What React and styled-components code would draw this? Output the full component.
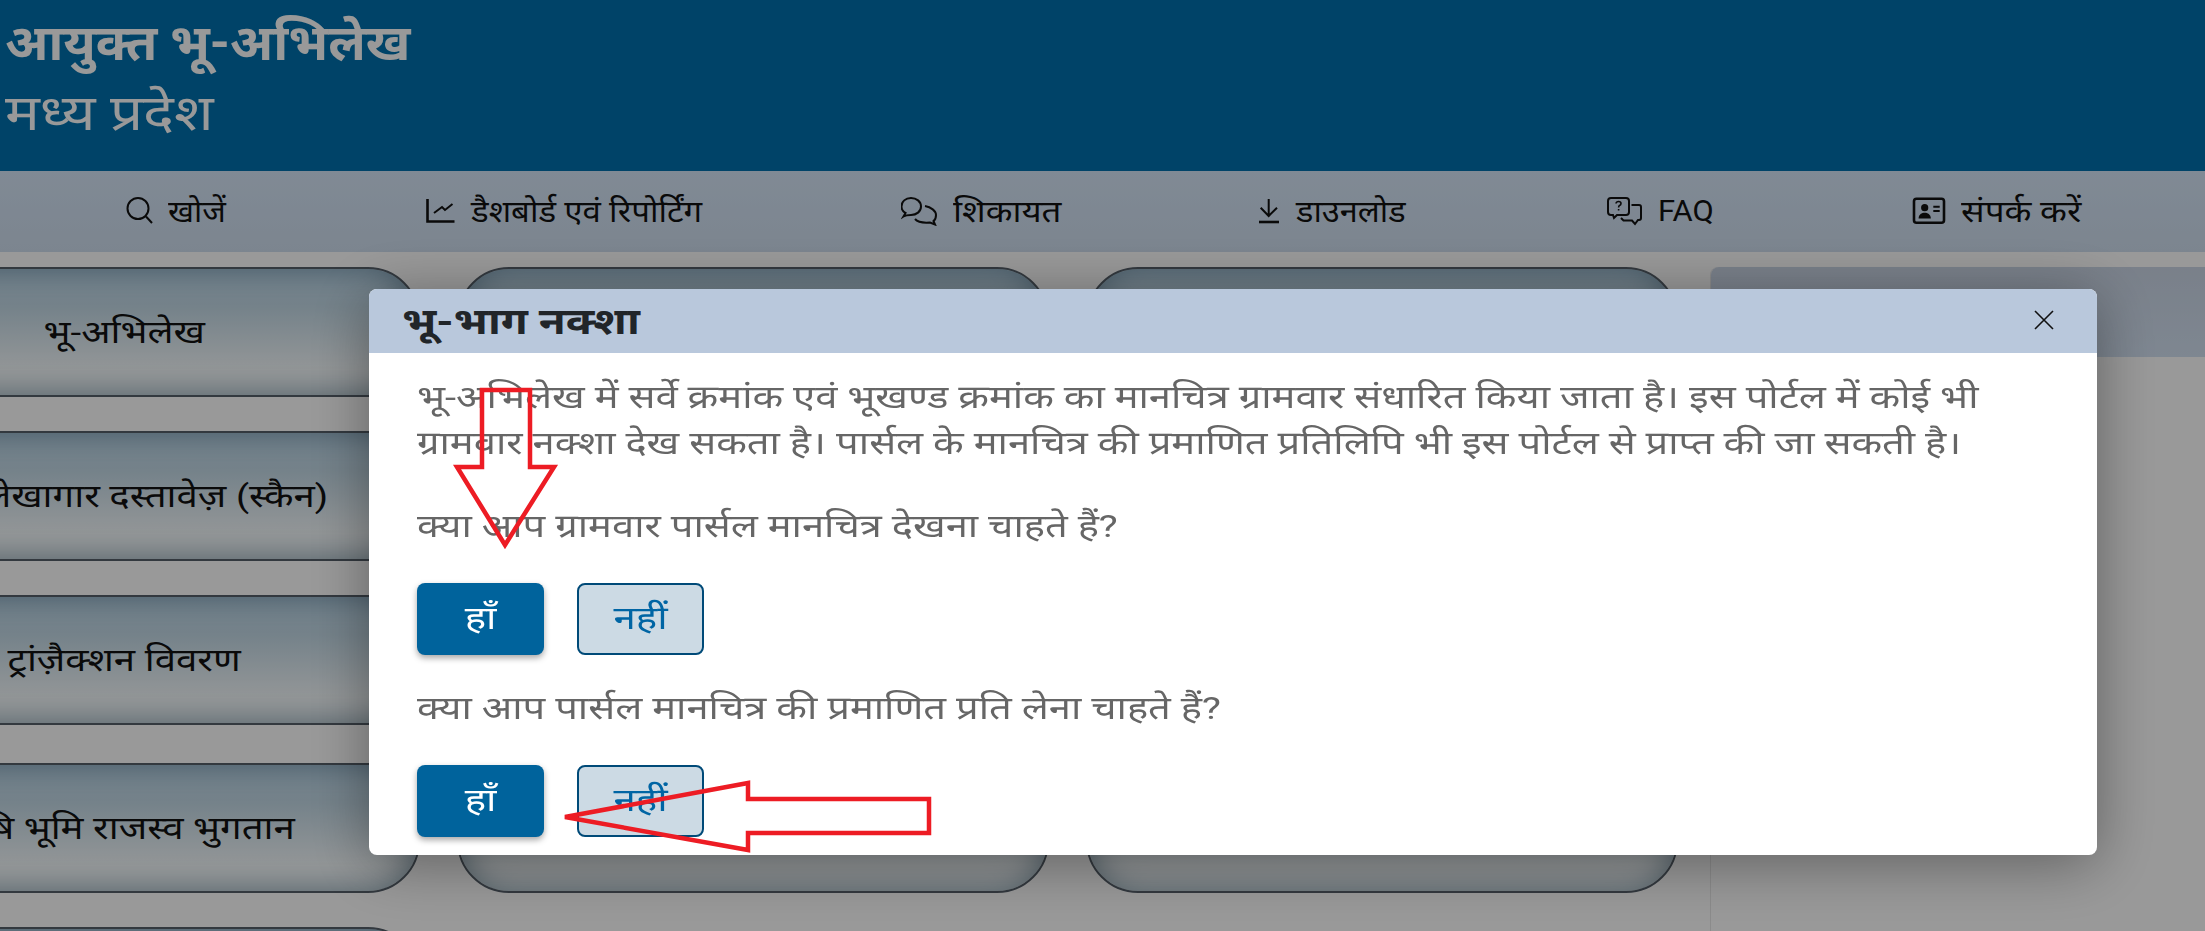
import React from 'react'
import styled, { createGlobalStyle } from 'styled-components'

const GlobalStyle = createGlobalStyle`
  html, body {
    margin: 0;
    padding: 0;
    height: 100%;
    overflow: hidden;
    background: #fff;
    font-family: Roboto, "Noto Sans", "DejaVu Sans", sans-serif;
  }
  * { box-sizing: border-box; }
`

// nav icons, drawn from the reference
const SearchIcon = () => (
  <NavIcon $w={28} $h={27} viewBox='0 0 28 27'>
    <circle cx='13' cy='11.5' r='10.5' />
    <path d='M21 19.5 L27 26' />
  </NavIcon>
)

const ChartIcon = () => (
  <NavIcon $w={30} $h={26} viewBox='0 0 30 26'>
    <path d='M1.5 1 V23.5 H28.5' strokeWidth='2.6' />
    <path d='M8 15 L16 9 L19 12 L26.5 6' />
  </NavIcon>
)

const ChatIcon = () => (
  <NavIcon $w={37} $h={30} viewBox='8 9 37 30'>
    <path d='M10.5 29.5 L12.5 26 C9.5 24.5 8.5 22 8.5 19.5 C8.5 14.5 12.5 11 18 11 C23.5 11 28 14.5 28 19.5 C28 24.5 23.5 28 18 28 C15.5 28 13 28 10.5 29.5 Z' />
    <path d='M32 19 C38 20 43 24 43 28 C43 31 42 33 40.5 34 L42 37.5 L37 35.5 C31 36 25 35.5 22 32' />
  </NavIcon>
)

const DownloadIcon = () => (
  <NavIcon $w={24} $h={28} viewBox='9 10 24 28'>
    <path d='M20.7 12 V29 M12.7 20.7 L20.7 29 L29 20.7' />
    <path d='M11 35 H31' strokeWidth='2.6' />
  </NavIcon>
)

const FaqIcon = () => (
  <NavIcon $w={37} $h={30} viewBox='8 9 37 30'>
    <path d='M13 11 H28 Q31 11 31 14 V25 Q31 28 28 28 H19 L16 31 L15 28 H13 Q10 28 10 25 V14 Q10 11 13 11 Z' />
    <path d='M33.5 18 H41 Q43 18 43 20 V31 Q43 33 41 33 H40 L37 37 L34 33.5 H25.5 L23 31' />
    <path d='M18 16.5 Q18.3 14.5 20.6 14.5 Q23 14.5 23 16.5 Q23 18 21.5 18.6 Q20.6 19 20.6 20.5 M20.6 22 V23.5' strokeWidth='1.6' />
  </NavIcon>
)

const ContactIcon = () => (
  <NavIcon $w={34} $h={28} viewBox='8 11 34 28'>
    <rect x='10' y='12.7' width='30' height='24' rx='2.5' strokeWidth='2.6' />
    <circle cx='20.7' cy='21.7' r='3.6' fill='#111' stroke='none' />
    <path d='M14.6 32.5 C14.6 28.5 17.8 26.8 20.7 26.8 C23.6 26.8 26.8 28.5 26.8 32.5 Z' fill='#111' stroke='none' />
    <path d='M29.3 20.7 H35.7 M29.3 25 H35.7' />
  </NavIcon>
)

const navItems = [
  { label: 'खोजें', Icon: SearchIcon, width: 103, stretch: 1.06 },
  { label: 'डैशबोर्ड एवं रिपोर्टिंग', Icon: ChartIcon, width: 277, stretch: 1.1 },
  { label: 'शिकायत', Icon: ChatIcon, width: 159, stretch: 1.16 },
  { label: 'डाउनलोड', Icon: DownloadIcon, width: 151, stretch: 1.085 },
  { label: 'FAQ', Icon: FaqIcon, width: 108, stretch: 1.03 },
  { label: 'संपर्क करें', Icon: ContactIcon, width: 168, stretch: 1.167 },
]

const columns = [
  ['भू-अभिलेख', 'अभिलेखागार दस्तावेज़ (स्कैन)', 'ट्रांज़ैक्शन विवरण', 'कृषि भूमि राजस्व भुगतान', ''],
  ['', '', '', ''],
  ['', '', '', ''],
]

const Question = ({ text }) => (
  <>
    <BodyText>
      <Wide $x={1.248}>{text}</Wide>
    </BodyText>
    <ButtonRow>
      <YesButton>
        <Wide $x={1.26} $origin='center'>हाँ</Wide>
      </YesButton>
      <NoButton>
        <Wide $x={1.26} $origin='center'>नहीं</Wide>
      </NoButton>
    </ButtonRow>
  </>
)

const App = () => {
  return (
    <Page>
      <GlobalStyle />
      <Header>
        <Title>
          <Wide $x={1.02}>आयुक्त भू-अभिलेख</Wide>
        </Title>
        <SubTitle>
          <Wide $x={1.165}>मध्य प्रदेश</Wide>
        </SubTitle>
      </Header>
      <Nav>
        {navItems.map(({ label, Icon, width, stretch }) => (
          <NavItem key={label} $w={width}>
            <Icon />
            <Wide $x={stretch}>{label}</Wide>
          </NavItem>
        ))}
      </Nav>
      <Content>
        {columns.map((cards, i) => (
          <Column key={i}>
            {cards.map((text, j) => (
              <Card key={j}>
                <Wide $x={1.2} $origin='center'>{text}</Wide>
              </Card>
            ))}
          </Column>
        ))}
        <SidePanel>
          <SideHead />
        </SidePanel>
      </Content>

      <Backdrop>
        <Modal>
          <ModalHead>
            <ModalTitle>
              <Wide $x={1.22}>भू-भाग नक्शा</Wide>
            </ModalTitle>
            <CloseIcon viewBox='0 0 20 20'>
              <path d='M1 1 L19 19 M19 1 L1 19' />
            </CloseIcon>
          </ModalHead>
          <ModalBody>
            <Intro>
              <IntroLine $x={1.248}>
                भू-अभिलेख में सर्वे क्रमांक एवं भूखण्ड क्रमांक का मानचित्र ग्रामवार संधारित किया जाता है। इस पोर्टल में कोई भी
              </IntroLine>
              <IntroLine $x={1.248}>
                ग्रामवार नक्शा देख सकता है। पार्सल के मानचित्र की प्रमाणित प्रतिलिपि भी इस पोर्टल से प्राप्त की जा सकती है।
              </IntroLine>
            </Intro>
            <Question text='क्या आप ग्रामवार पार्सल मानचित्र देखना चाहते हैं?' />
            <Question text='क्या आप पार्सल मानचित्र की प्रमाणित प्रति लेना चाहते हैं?' />
          </ModalBody>
          <Arrows viewBox='0 0 1728 566'>
            <polygon points='113,101 161,101 161,178 185,178 136,256 88,178 113,178' />
            <polygon points='196,528 379,494 379,510 560,510 560,544 379,544 379,561' />
          </Arrows>
        </Modal>
      </Backdrop>
    </Page>
  )
}

const Page = styled.div`
  width: 2205px;
  height: 931px;
  overflow: hidden;
  background: #fff;
`

// the reference's Devanagari face runs wider than the installed one
const Wide = styled.span`
  display: inline-block;
  white-space: nowrap;
  transform: scaleX(${(p) => p.$x});
  transform-origin: ${(p) => p.$origin || 'left'} center;
`

const Header = styled.header`
  height: 171px;
  padding: 0 5px;
  background: #0071ad;
  color: #fff;
`

const Title = styled.div`
  font-size: 50px;
  font-weight: 700;
  line-height: 86px;
`

const SubTitle = styled.div`
  font-size: 50px;
  font-weight: 400;
  line-height: 54px;
`

const Nav = styled.nav`
  display: flex;
  align-items: center;
  justify-content: space-between;
  height: 81px;
  padding: 0 125px 2px;
  background: linear-gradient(180deg, #d6e6f8, #cfdeef);
`

const NavItem = styled.div`
  display: flex;
  flex: 0 0 ${(p) => p.$w}px;
  align-items: center;
  gap: 15px;
  font-size: 30px;
  color: #111;
`

const NavIcon = styled.svg`
  flex: none;
  width: ${(p) => p.$w}px;
  height: ${(p) => p.$h}px;
  fill: none;
  stroke: #111;
  stroke-width: 2;
`

const Content = styled.main`
  display: flex;
  gap: 37px;
  margin-left: -172px;
  padding-top: 15px;
`

const Column = styled.div`
  display: flex;
  flex: 0 0 592px;
  flex-direction: column;
  gap: 34px;
`

const Card = styled.div`
  display: flex;
  flex: 0 0 130px;
  align-items: center;
  justify-content: center;
  padding-bottom: 4px;
  border: 2px solid #555f69;
  border-radius: 52px;
  background: linear-gradient(180deg, #c3dced 0%, #c3d9e6 30%, #f6fbfd 80%);
  box-shadow: inset 0 0 30px rgba(50, 90, 115, 0.6);
  font-size: 32px;
  color: #111;
  &:nth-child(4) {
    margin-top: 4px;
  }
`

const SidePanel = styled.aside`
  flex: 1;
  height: 700px;
  margin-left: -7px;
  margin-left: -5px;
  border-left: 1px solid #e8e8e8;
  border-radius: 8px 0 0 0;
`

const SideHead = styled.div`
  height: 90px;
  border-radius: 8px 0 0 0;
  background: linear-gradient(180deg, #cbd6e6, #d3e1f2);
`

const Backdrop = styled.div`
  position: fixed;
  inset: 0;
  background: rgba(0, 0, 0, 0.4);
`

const Modal = styled.div`
  position: absolute;
  left: 369px;
  top: 289px;
  width: 1728px;
  height: 566px;
  border-radius: 8px;
  background: #fff;
  box-shadow: 0 8px 60px rgba(0, 0, 0, 0.38);
`

const ModalHead = styled.div`
  display: flex;
  align-items: center;
  justify-content: space-between;
  height: 64px;
  padding: 0 43px 2px 33px;
  border-radius: 8px 8px 0 0;
  background: #b9c8dc;
`

const ModalTitle = styled.div`
  font-size: 36px;
  font-weight: 700;
  color: #212529;
`

const CloseIcon = styled.svg`
  width: 20px;
  height: 20px;
  fill: none;
  stroke: #111;
  stroke-width: 1.6;
`

const ModalBody = styled.div`
  padding: 21px 48px 0;
`

const BodyText = styled.p`
  margin: 0 0 34px;
  font-size: 32px;
  line-height: 46px;
  color: #666;
`

const Intro = styled(BodyText)`
  margin-bottom: 37px;
`

const IntroLine = styled(Wide)`
  display: block;
`

const ButtonRow = styled.div`
  display: flex;
  gap: 33px;
  margin-bottom: 30px;
`

const YesButton = styled.button`
  width: 127px;
  height: 72px;
  padding: 0 0 5px;
  border: 0;
  border-radius: 8px;
  background: #00639c;
  box-shadow: 0 3px 6px rgba(0, 0, 0, 0.35);
  font: inherit;
  font-size: 32px;
  color: #fff;
`

const NoButton = styled.button`
  width: 127px;
  height: 72px;
  padding: 0 0 5px;
  border: 2px solid #004a78;
  border-radius: 8px;
  background: #ccdae4;
  font: inherit;
  font-size: 32px;
  color: #0065a4;
`

const Arrows = styled.svg`
  position: absolute;
  inset: 0;
  width: 1728px;
  height: 566px;
  pointer-events: none;
  polygon {
    fill: none;
    stroke: #ed1c24;
    stroke-width: 4.5;
  }
`

export default App
